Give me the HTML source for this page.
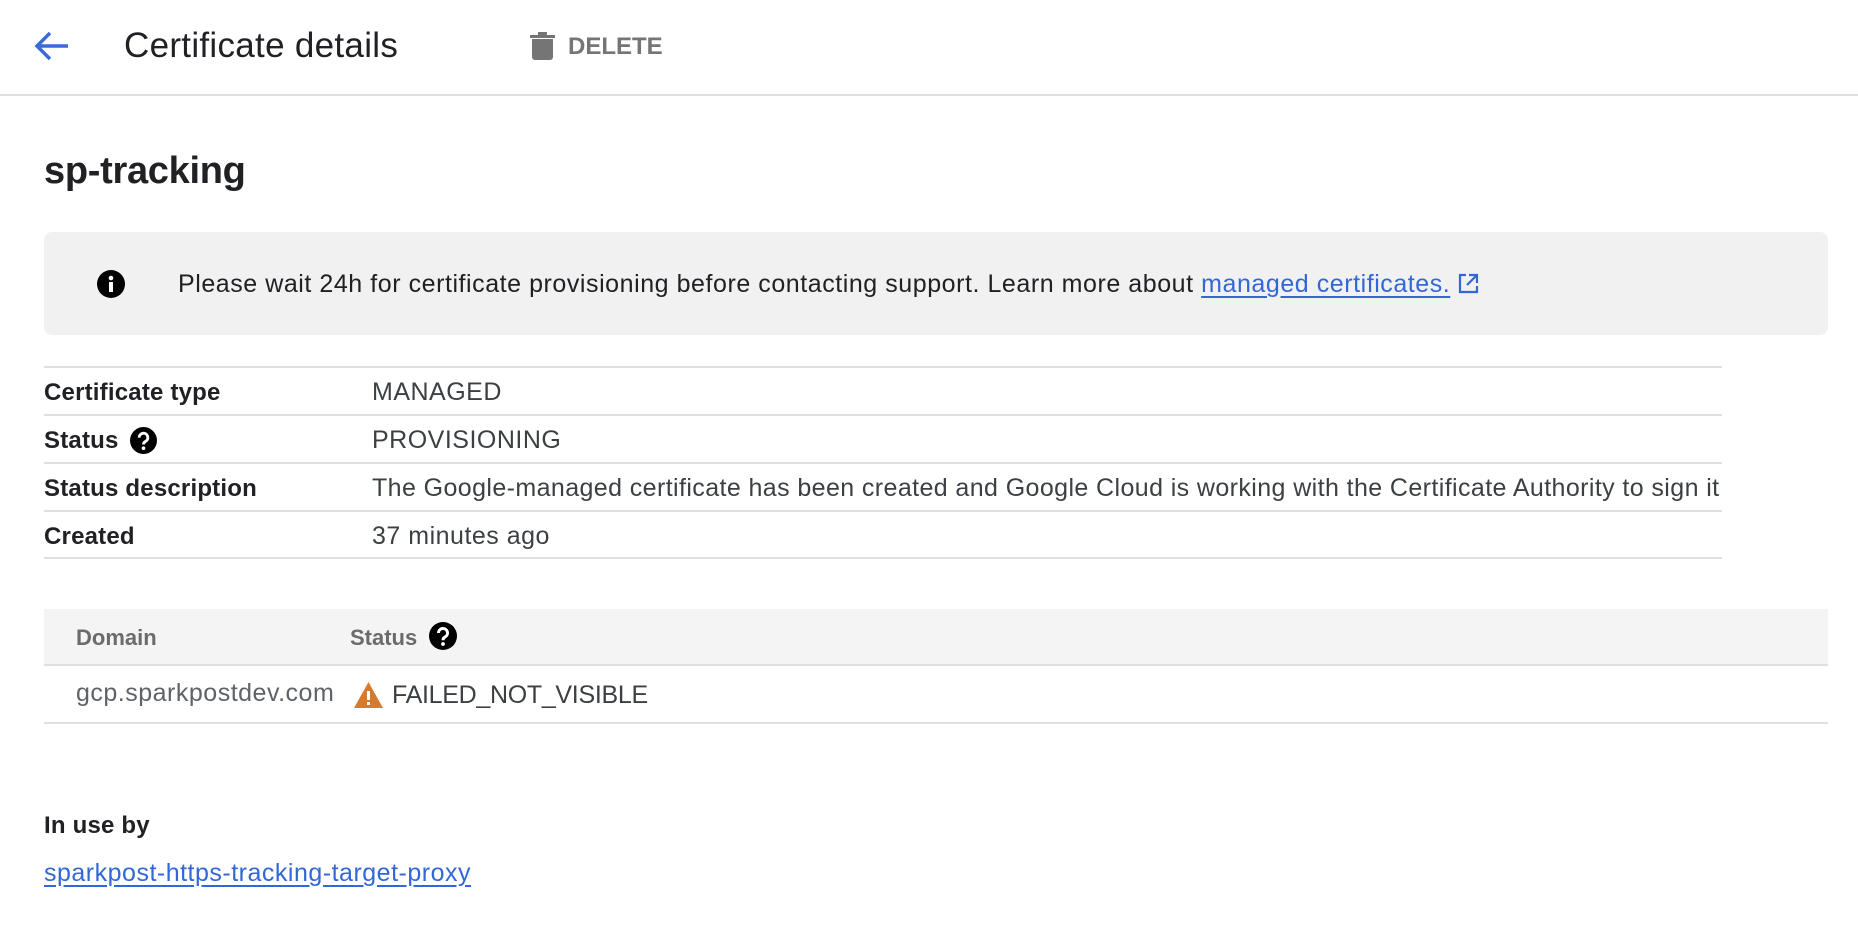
<!DOCTYPE html>
<html><head><meta charset="utf-8"><style>
*{margin:0;padding:0;box-sizing:border-box}
body{width:1858px;height:944px;background:#fff;font-family:"Liberation Sans",sans-serif;position:relative;overflow:hidden;color:#202124}
.a{position:absolute;white-space:nowrap}
.hl{position:absolute;height:2px;background:#e0e0e0}
.lbl{font-size:24px;font-weight:bold;color:#202124;letter-spacing:0.2px}
.val{font-size:25px;color:#3c4043;letter-spacing:0.5px}
a{color:#3367d6;text-decoration:underline;text-underline-offset:4px}
</style></head><body>
<svg class="a" style="left:34px;top:30px" width="36" height="32" viewBox="0 0 36 32"><path d="M34 16H4M16 3L3 16l13 13" fill="none" stroke="#3b6bd6" stroke-width="3.5"/></svg>
<div class="a" style="left:124px;top:26px;font-size:35px;color:#202124;letter-spacing:0.3px">Certificate details</div>
<svg class="a" style="left:530px;top:32px" width="25" height="28" viewBox="0 0 25 28"><rect x="0" y="3" width="25" height="3" fill="#757575"/><rect x="8" y="0" width="9" height="4" fill="#757575"/><path d="M2 7h21v18a3 3 0 0 1-3 3H5a3 3 0 0 1-3-3z" fill="#757575"/></svg>
<div class="a" style="left:568px;top:33px;font-size:24px;font-weight:bold;color:#757575">DELETE</div>
<div class="hl" style="left:0;top:94px;width:1858px"></div>
<div class="a" style="left:44px;top:150px;font-size:38px;font-weight:bold;color:#202124;letter-spacing:-0.3px">sp-tracking</div>
<div class="a" style="left:44px;top:232px;width:1784px;height:103px;background:#f1f1f1;border-radius:8px"></div>
<svg class="a" style="left:97px;top:270px" width="28" height="28" viewBox="0 0 28 28"><circle cx="14" cy="14" r="14" fill="#000"/><rect x="12" y="12" width="4" height="10" fill="#fff"/><circle cx="14" cy="8" r="2.3" fill="#fff"/></svg>
<div class="a" style="left:178px;top:270px;font-size:25px;color:#202124;letter-spacing:0.55px">Please wait 24h for certificate provisioning before contacting support. Learn more about <a>managed certificates.</a><svg style="margin-left:8px;vertical-align:-2px" width="21" height="21" viewBox="0 0 21 21"><path d="M8 2H2v17h17v-6M11 2h8v8M19 2L9 12" fill="none" stroke="#3367d6" stroke-width="2.2"/></svg></div>
<div class="hl" style="left:44px;top:366px;width:1678px"></div>
<div class="hl" style="left:44px;top:414px;width:1678px"></div>
<div class="hl" style="left:44px;top:462px;width:1678px"></div>
<div class="hl" style="left:44px;top:510px;width:1678px"></div>
<div class="hl" style="left:44px;top:557px;width:1678px"></div>
<div class="a lbl" style="left:44px;top:379px">Certificate type</div>
<div class="a val" style="left:372px;top:378px">MANAGED</div>
<div class="a lbl" style="left:44px;top:427px">Status</div>
<svg class="a" style="left:130px;top:427px" width="27" height="27" viewBox="0 0 28 28"><circle cx="14" cy="14" r="14" fill="#000"/><path d="M9.5 11a4.5 4.5 0 1 1 6.5 4c-1.5.8-2 1.5-2 3.2" fill="none" stroke="#fff" stroke-width="3"/><circle cx="14" cy="22" r="1.9" fill="#fff"/></svg>
<div class="a val" style="left:372px;top:426px">PROVISIONING</div>
<div class="a lbl" style="left:44px;top:475px">Status description</div>
<div class="a val" style="left:372px;top:474px;letter-spacing:0.4px">The Google-managed certificate has been created and Google Cloud is working with the Certificate Authority to sign it</div>
<div class="a lbl" style="left:44px;top:523px">Created</div>
<div class="a val" style="left:372px;top:522px">37 minutes ago</div>
<div class="a" style="left:44px;top:609px;width:1784px;height:56px;background:#f4f4f4"></div>
<div class="hl" style="left:44px;top:664px;width:1784px"></div>
<div class="a" style="left:76px;top:625px;font-size:22px;font-weight:bold;color:#6b6b6b">Domain</div>
<div class="a" style="left:350px;top:625px;font-size:22px;font-weight:bold;color:#6b6b6b">Status</div>
<svg class="a" style="left:429px;top:622px" width="28" height="28" viewBox="0 0 28 28"><circle cx="14" cy="14" r="14" fill="#000"/><path d="M9.5 11a4.5 4.5 0 1 1 6.5 4c-1.5.8-2 1.5-2 3.2" fill="none" stroke="#fff" stroke-width="3"/><circle cx="14" cy="22" r="1.9" fill="#fff"/></svg>
<div class="a val" style="left:76px;top:679px;color:#5f6368">gcp.sparkpostdev.com</div>
<svg class="a" style="left:354px;top:682px" width="29" height="26" viewBox="0 0 29 26"><path d="M14.5 0L29 26H0z" fill="#d87a2b"/><rect x="13" y="9" width="3" height="9" fill="#fff"/><rect x="13" y="20" width="3" height="3" fill="#fff"/></svg>
<div class="a val" style="left:392px;top:681px;letter-spacing:-0.3px">FAILED_NOT_VISIBLE</div>
<div class="hl" style="left:44px;top:722px;width:1784px"></div>
<div class="a lbl" style="left:44px;top:812px">In use by</div>
<div class="a" style="left:44px;top:859px;font-size:25px;letter-spacing:0.5px"><a>sparkpost-https-tracking-target-proxy</a></div>
</body></html>
